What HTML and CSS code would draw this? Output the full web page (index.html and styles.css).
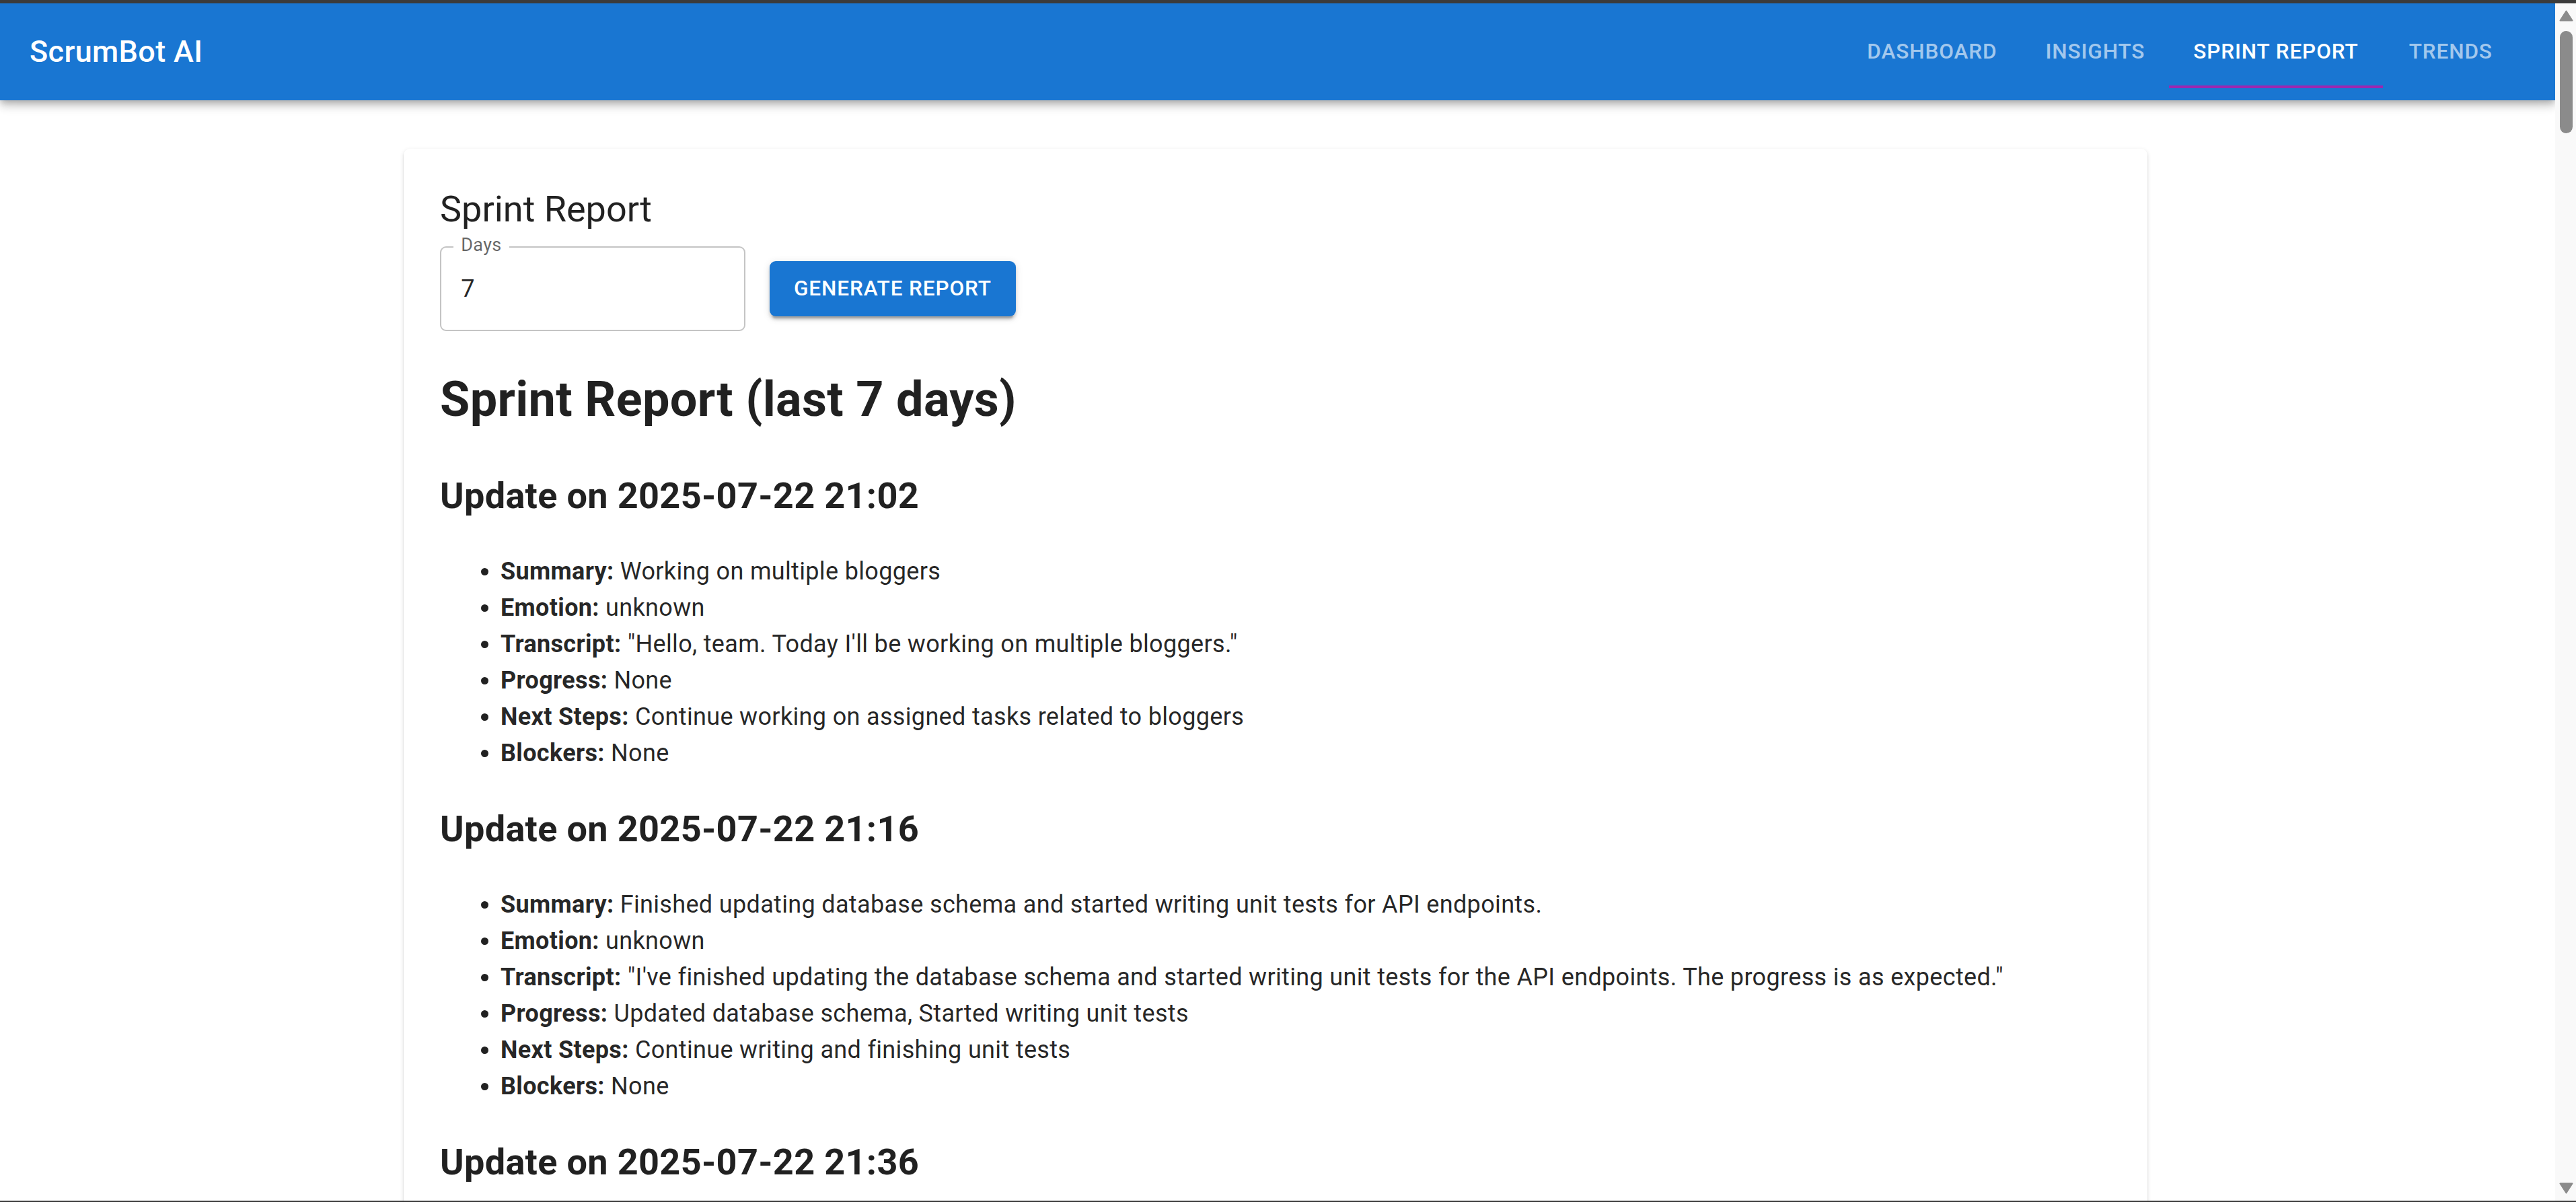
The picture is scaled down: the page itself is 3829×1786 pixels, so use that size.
FILE: index.html
```html
<!DOCTYPE html>
<html lang="en">
<head>
<meta charset="utf-8">
<title>ScrumBot AI</title>
<link rel="stylesheet" href="styles.css">
</head>
<body>
<div class="frame-top"></div>
<div class="window">
  <div class="viewport">
    <header class="appbar">
      <div class="toolbar">
        <h6 class="brand">ScrumBot AI</h6>
        <nav class="tabs">
          <div class="tab">Dashboard</div>
          <div class="tab">Insights</div>
          <div class="tab active">Sprint Report</div>
          <div class="tab">Trends</div>
        </nav>
      </div>
    </header>
    <main class="container">
      <section class="card">
        <h5 class="card-title">Sprint Report</h5>
        <div class="form-row">
          <div class="field">
            <label class="field-label">Days</label>
            <input class="field-input" type="text" value="7">
          </div>
          <button class="btn">Generate Report</button>
        </div>
        <div class="report">
          <h1>Sprint Report (last 7 days)</h1>
          <h2>Update on 2025-07-22 21:02</h2>
          <ul>
            <li><strong>Summary:</strong> Working on multiple bloggers</li>
            <li><strong>Emotion:</strong> unknown</li>
            <li><strong>Transcript:</strong> "Hello, team. Today I'll be working on multiple bloggers."</li>
            <li><strong>Progress:</strong> None</li>
            <li><strong>Next Steps:</strong> Continue working on assigned tasks related to bloggers</li>
            <li><strong>Blockers:</strong> None</li>
          </ul>
          <h2>Update on 2025-07-22 21:16</h2>
          <ul>
            <li><strong>Summary:</strong> Finished updating database schema and started writing unit tests for API endpoints.</li>
            <li><strong>Emotion:</strong> unknown</li>
            <li><strong>Transcript:</strong> "I've finished updating the database schema and started writing unit tests for the API endpoints. The progress is as expected."</li>
            <li><strong>Progress:</strong> Updated database schema, Started writing unit tests</li>
            <li><strong>Next Steps:</strong> Continue writing and finishing unit tests</li>
            <li><strong>Blockers:</strong> None</li>
          </ul>
          <h2>Update on 2025-07-22 21:36</h2>
        </div>
      </section>
    </main>
  </div>
  <div class="scrollbar">
    <svg class="sb-arrow" width="21" height="17" viewBox="0 0 21 17"><polygon points="10.5,1.5 19.5,15.5 1.5,15.5" fill="#8b8b8b" stroke="#8b8b8b" stroke-width="2" stroke-linejoin="round"/></svg>
    <div class="sb-thumb"></div>
    <div class="sb-space"></div>
    <svg class="sb-arrow" width="21" height="17" viewBox="0 0 21 17"><polygon points="1.5,1.5 19.5,1.5 10.5,15.5" fill="#8b8b8b" stroke="#8b8b8b" stroke-width="2" stroke-linejoin="round"/></svg>
  </div>
</div>
<div class="frame-bottom"></div>
</body>
</html>
```
FILE: styles.css
```css
* { box-sizing: border-box; }
html, body { margin: 0; height: 100%; }
body {
  display: flex;
  flex-direction: column;
  overflow: hidden;
  font-family: Roboto, "Helvetica Neue", Arial, sans-serif;
  font-size: 36px;
  line-height: 1.5;
  letter-spacing: 0.00938em;
  color: rgba(0, 0, 0, 0.87);
  background: #3b3b3b;
}
.frame-top { flex: none; height: 5px; background: #3b3b3b; }
.frame-bottom { flex: none; height: 2px; background: #3b3b3b; }
.window { flex: 1; min-height: 0; display: flex; background: #fff; }
.viewport { flex: 1; min-width: 0; overflow: hidden; background: #fff; }

.appbar {
  position: relative;
  z-index: 1;
  background: #1976d2;
  color: #fff;
  box-shadow: 0 4.5px 9px -2.25px rgba(0,0,0,0.2), 0 9px 11.25px 0 rgba(0,0,0,0.14), 0 2.25px 22.5px 0 rgba(0,0,0,0.12);
}
.toolbar {
  height: 144px;
  padding: 0 54px 0 44px;
  display: flex;
  align-items: center;
}
.brand {
  flex: 1;
  margin: 0;
  font-size: 45px;
  font-weight: 500;
  line-height: 1.6;
  letter-spacing: 0.0075em;
}
.tabs { display: flex; }
.tab {
  position: relative;
  min-width: 202.5px;
  min-height: 108px;
  padding: 27px 36px;
  display: flex;
  align-items: center;
  justify-content: center;
  font-size: 31.5px;
  font-weight: 500;
  line-height: 1.25;
  letter-spacing: 0.02857em;
  text-transform: uppercase;
  color: #fff;
  opacity: 0.6;
}
.tab.active { opacity: 1; }
.tab.active::after {
  content: "";
  position: absolute;
  left: 0; right: 0; bottom: 0;
  height: 4.5px;
  background: #9c27b0;
}

.container {
  max-width: 2700px;
  margin: 72px auto 0;
  padding: 0 57px 0 51px;
}
.card {
  background: #fff;
  border-radius: 9px;
  padding: 54px;
  box-shadow: 0 4.5px 2.25px -2.25px rgba(0,0,0,0.2), 0 2.25px 2.25px 0 rgba(0,0,0,0.14), 0 2.25px 6.75px 0 rgba(0,0,0,0.12);
}
.card-title {
  margin: 0 0 18.9px;
  font-size: 54px;
  font-weight: 400;
  line-height: 1.334;
  letter-spacing: 0;
}
.form-row { display: flex; align-items: center; gap: 36px; }
.field {
  position: relative;
  width: 454px;
  height: 126px;
  border: 2.25px solid rgba(0,0,0,0.23);
  border-radius: 9px;
  display: flex;
  align-items: center;
}
.field-label {
  position: absolute;
  left: 18px;
  top: -22.5px;
  padding: 0 11.25px;
  background: #fff;
  font-size: 27px;
  line-height: 38.8px;
  color: rgba(0,0,0,0.6);
}
.field-input {
  width: 100%;
  border: 0;
  outline: 0;
  background: transparent;
  padding: 0 29.25px;
  font-family: Roboto, "Helvetica Neue", Arial, sans-serif;
  font-size: 36px;
  line-height: 51.75px;
  height: 51.75px;
  letter-spacing: 0.00938em;
  color: rgba(0,0,0,0.87);
}
.btn {
  border: 0;
  border-radius: 9px;
  background: #1976d2;
  color: #fff;
  padding: 13.5px 36px;
  font-family: Roboto, "Helvetica Neue", Arial, sans-serif;
  font-size: 31.5px;
  font-weight: 500;
  line-height: 1.75;
  letter-spacing: 0.02857em;
  text-transform: uppercase;
  box-shadow: 0 6.75px 2.25px -4.5px rgba(0,0,0,0.2), 0 4.5px 4.5px 0 rgba(0,0,0,0.14), 0 2.25px 11.25px 0 rgba(0,0,0,0.12);
}

.report h1 { font-size: 72px; font-weight: 700; margin: 48.24px 0; }
.report h2 { font-size: 54px; font-weight: 700; margin: 44.82px 0; }
.report ul { margin: 36px 0; padding-left: 90px; }
.report li { line-height: 54px; }
.report strong { font-weight: 700; }

.scrollbar {
  flex: none;
  width: 31px;
  background: #f9f9f9;
  display: flex;
  flex-direction: column;
  align-items: center;
  padding: 10px 0 10px 2px;
}
.sb-arrow { display: block; flex: none; }
.sb-thumb {
  flex: none;
  margin-top: 14px;
  width: 19px;
  height: 152px;
  border-radius: 9.5px;
  background: #8b8b8b;
}
.sb-space { flex: 1; }
```
